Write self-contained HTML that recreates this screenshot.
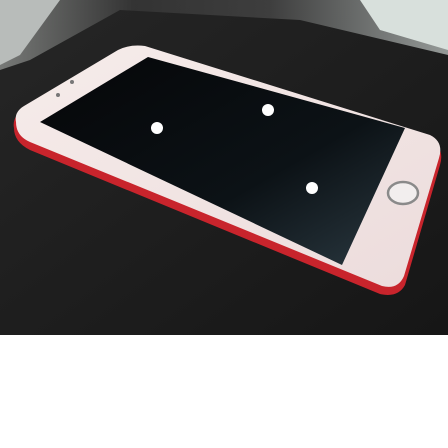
<!DOCTYPE html>
<html><head><style>
html,body{margin:0;padding:0;width:448px;height:448px;background:#fff;overflow:hidden}
</style></head><body>
<svg width="448" height="448" viewBox="0 0 448 448" xmlns="http://www.w3.org/2000/svg">
<defs>
<linearGradient id="bg" x1="0" y1="0" x2="1" y2="1">
<stop offset="0" stop-color="#262626"/><stop offset="1" stop-color="#161616"/>
</linearGradient>
<linearGradient id="top" x1="0" y1="0" x2="1" y2="0">
<stop offset="0" stop-color="#9a9d9a"/><stop offset="0.3" stop-color="#3a3a3a"/><stop offset="0.6" stop-color="#4a4a4a"/><stop offset="1" stop-color="#c8cfcc"/>
</linearGradient>
<linearGradient id="body" x1="0" y1="0" x2="1" y2="1">
<stop offset="0" stop-color="#f6ecea"/><stop offset="1" stop-color="#ecdcdc"/>
</linearGradient>
<linearGradient id="scr" x1="0" y1="0" x2="1" y2="1">
<stop offset="0" stop-color="#050608"/><stop offset="0.6" stop-color="#0c1216"/><stop offset="1" stop-color="#2a3840"/>
</linearGradient>
</defs>
<rect x="0" y="0" width="448" height="335" fill="url(#bg)"/>
<polygon points="0,0 448,0 448,55 300,20 120,10 30,60 0,70" fill="url(#top)" opacity="0.7"/>
<polygon points="0,0 60,0 20,55 0,65" fill="#b8bcba"/>
<polygon points="360,0 448,0 448,50 380,30" fill="#d8e0dc"/>
<path d="M14,128 Q12,118 22,110 L118,52 Q130,45 145,48 L430,140 Q445,148 440,165 L405,285 Q398,298 380,294 L30,150 Q14,142 14,128Z" fill="#c8242c"/>
<path d="M16,122 Q14,112 24,106 L118,50 Q130,44 145,46 L430,135 Q444,142 439,158 L404,276 Q398,290 382,286 L30,142 Q16,136 16,122Z" fill="url(#body)"/>
<polygon points="40,122 148,57 405,128 342,265" fill="url(#scr)"/>
<circle cx="268" cy="110" r="6" fill="#fff"/>
<circle cx="157" cy="128" r="6" fill="#fff"/>
<circle cx="312" cy="188" r="6" fill="#fff"/>
<ellipse cx="403" cy="193" rx="15" ry="11" fill="#f2eeee" stroke="#8a8a8a" stroke-width="2.5"/>
<circle cx="72" cy="82" r="2" fill="#777"/>
<circle cx="58" cy="95" r="2" fill="#777"/>
</svg>
</body></html>
